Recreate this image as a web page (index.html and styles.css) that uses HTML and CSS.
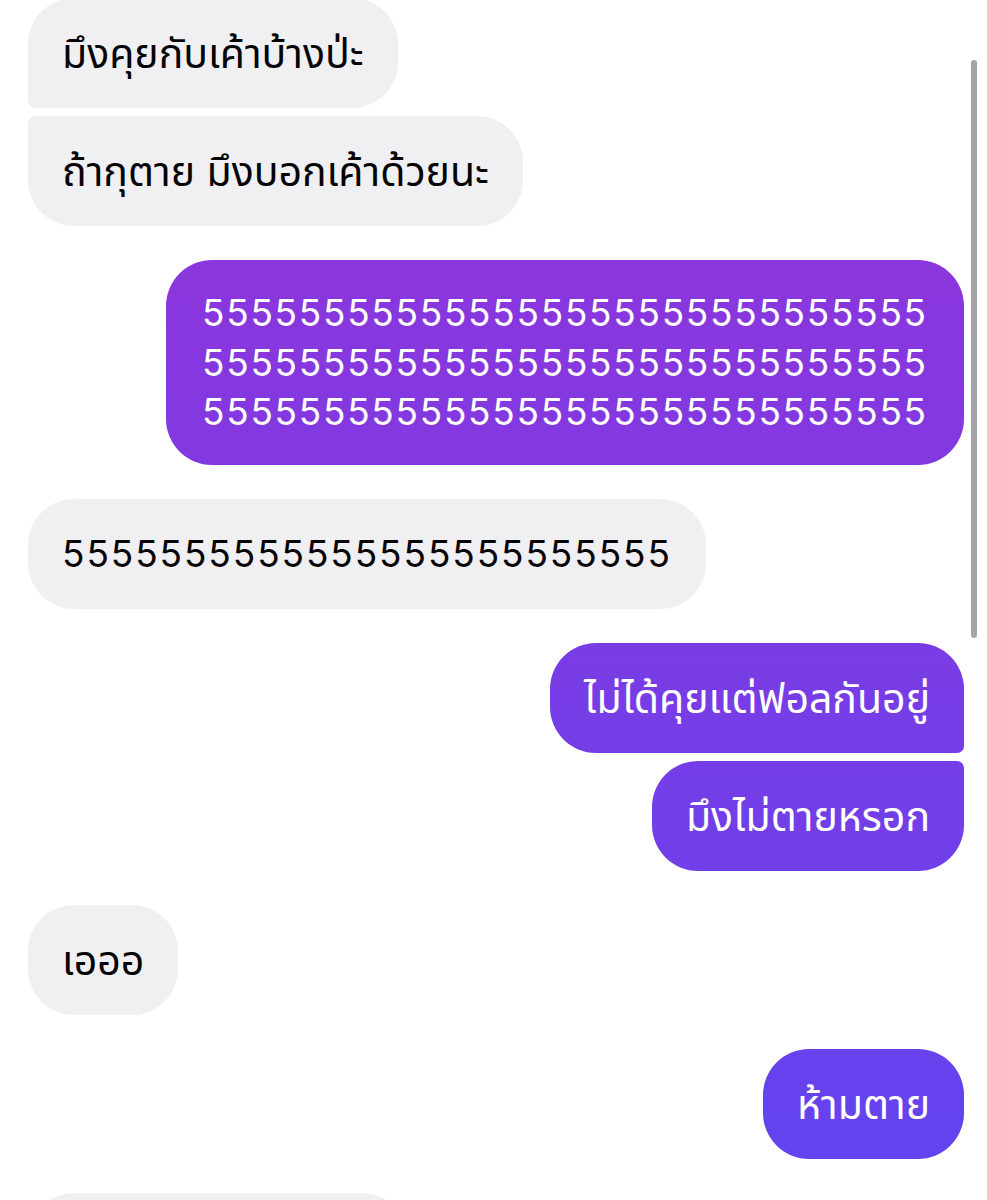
FILE: index.html
```html
<!DOCTYPE html>
<html lang="th">
<head>
    <meta charset="UTF-8">
    <title>แชท</title>
    <link rel="stylesheet" href="styles.css">
</head>
<body>
    <div id="chat">
        <div class="group them">
            <div class="bubble top">มึงคุยกับเค้าบ้างป่ะ</div>
            <div class="bubble bottom">ถ้ากุตาย มึงบอกเค้าด้วยนะ</div>
        </div>

        <div class="group me">
            <div class="bubble num long">555555555555555555555555555555555555555555555555555555555555555555555555555555555555555555</div>
        </div>

        <div class="group them">
            <div class="bubble num">5555555555555555555555555</div>
        </div>

        <div class="group me">
            <div class="bubble top">ไม่ได้คุยแต่ฟอลกันอยู่</div>
            <div class="bubble bottom">มึงไม่ตายหรอก</div>
        </div>

        <div class="group them">
            <div class="bubble">เอออ</div>
        </div>

        <div class="group me">
            <div class="bubble">ห้ามตาย</div>
        </div>

        <!-- next message, cut off by the bottom of the screen -->
        <div class="group them">
            <div class="bubble cut"></div>
        </div>

        <div class="scrollbar"></div>
    </div>
</body>
</html>
```

FILE: styles.css
```css
body {
    margin: 0;
    background-color: #fff;
    font-family: Inter, "Noto Sans Thai", "Noto Sans", sans-serif;
}
#chat {
    position: relative;
    height: 1202px;
    overflow: hidden;
    padding: 0 23px 0 28px;
    margin-top: -2px;
    display: flex;
    flex-direction: column;
    gap: 34px;
}
.group {
    display: flex;
    flex-direction: column;
    gap: 8px;
}
.group.them {
    align-items: flex-start;
}
.group.me {
    align-items: flex-end;
}
.bubble {
    box-sizing: border-box;
    min-height: 110px;
    padding: 30px 34px;
    line-height: 50px;
    font-size: 41px;
    border-radius: 46px;
    max-width: 800px;
    word-break: break-all;
}
.them .bubble {
    background-color: #f0f0f3;
    color: #050505;
}
.me .bubble {
    color: #fff;
    background: linear-gradient(180deg, #9632d7 0px, #6144f0 1200px) fixed;
}
.them .top { border-bottom-left-radius: 7px; }
.them .bottom { border-top-left-radius: 7px; }
.me .top { border-bottom-right-radius: 7px; }
.me .bottom { border-top-right-radius: 7px; }
.num {
    font-size: 37px;
    letter-spacing: 1.9px;
}
.long {
    max-width: 798px;
    padding: 28px 36px;
    line-height: 49.5px;
    letter-spacing: 1.7px;
}
.cut {
    width: 380px;
}
.scrollbar {
    position: absolute;
    top: 62px;
    right: 10px;
    width: 6px;
    height: 578px;
    border-radius: 3px;
    background-color: #a4a4a4;
}
```
